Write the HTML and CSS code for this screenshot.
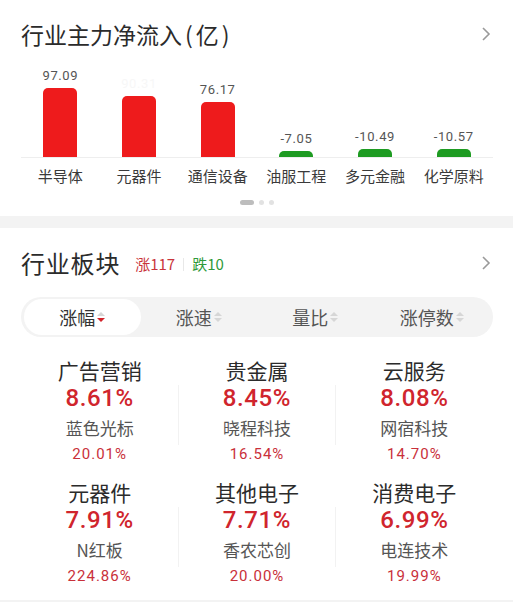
FILE: index.html
```html
<!DOCTYPE html>
<html lang="zh">
<head>
<meta charset="utf-8">
<link rel="stylesheet" href="styles.css">
</head>
<body>
<section class="card flow">
  <div class="head">
    <h2 class="title t1">行业主力净流入<span class="paren">(</span>亿<span class="paren">)</span></h2>
    <svg class="chev" viewBox="0 0 10 16" width="10" height="16"><path d="M2 2 L8 8 L2 14" fill="none" stroke="#9a9a9a" stroke-width="1.6"/></svg>
  </div>
  <div class="chart">
    <div class="col"><span class="val">97.09</span><div class="bar up" style="height:69px"></div></div>
    <div class="col"><span class="val ghost">90.31</span><div class="bar up" style="height:61px"></div></div>
    <div class="col"><span class="val">76.17</span><div class="bar up" style="height:55px"></div></div>
    <div class="col"><span class="val">-7.05</span><div class="bar down" style="height:6px"></div></div>
    <div class="col"><span class="val">-10.49</span><div class="bar down" style="height:8px"></div></div>
    <div class="col"><span class="val">-10.57</span><div class="bar down" style="height:8px"></div></div>
  </div>
  <div class="cats">
    <span>半导体</span><span>元器件</span><span>通信设备</span><span>油服工程</span><span>多元金融</span><span>化学原料</span>
  </div>
  <div class="dots"><i class="pill"></i><i></i><i></i></div>
</section>
<div class="sep"></div>
<section class="card sectors">
  <div class="head">
    <div class="left">
      <h2 class="title t2">行业板块</h2>
      <span class="cnt red">涨117</span><span class="bar-div"></span><span class="cnt green">跌10</span>
    </div>
    <svg class="chev" viewBox="0 0 10 16" width="10" height="16"><path d="M2 2 L8 8 L2 14" fill="none" stroke="#9a9a9a" stroke-width="1.6"/></svg>
  </div>
  <div class="tabs">
    <div class="tab active">涨幅<span class="sort"><i class="u"></i><i class="d on"></i></span></div>
    <div class="tab">涨速<span class="sort"><i class="u"></i><i class="d"></i></span></div>
    <div class="tab">量比<span class="sort"><i class="u"></i><i class="d"></i></span></div>
    <div class="tab">涨停数<span class="sort"><i class="u"></i><i class="d"></i></span></div>
  </div>
  <div class="grid">
    <div class="cell"><div class="nm">广告营销</div><div class="pct">8.61%</div><div class="stk">蓝色光标</div><div class="sp">20.01%</div></div>
    <div class="cell mid"><div class="nm">贵金属</div><div class="pct">8.45%</div><div class="stk">晓程科技</div><div class="sp">16.54%</div></div>
    <div class="cell"><div class="nm">云服务</div><div class="pct">8.08%</div><div class="stk">网宿科技</div><div class="sp">14.70%</div></div>
    <div class="cell"><div class="nm">元器件</div><div class="pct">7.91%</div><div class="stk">N红板</div><div class="sp">224.86%</div></div>
    <div class="cell mid"><div class="nm">其他电子</div><div class="pct">7.71%</div><div class="stk">香农芯创</div><div class="sp">20.00%</div></div>
    <div class="cell"><div class="nm">消费电子</div><div class="pct">6.99%</div><div class="stk">电连技术</div><div class="sp">19.99%</div></div>
  </div>
</section>
<div class="sep bottom"></div>
</body>
</html>
```
FILE: styles.css
```css
* { box-sizing: border-box; margin: 0; padding: 0; }
html, body { background: #fff; }
body {
  width: 513px;
  font-family: "Noto Sans CJK SC", "Noto Sans", sans-serif;
  color: #333;
}
.card { padding: 0 20px 0 21px; }
.flow { padding-top: 19px; }
.head {
  display: flex;
  align-items: center;
  justify-content: space-between;
  height: 30px;
}
.title {
  line-height: 30px;
  font-weight: 400;
  color: #2b2b2b;
}
.t1 { font-size: 23px; }
.t1 .paren { padding: 0 3px; }
.t2 { font-size: 24px; letter-spacing: 0.8px; }
.chev { margin-right: 2px; }
.chart {
  display: flex;
  height: 109px;
  align-items: flex-end;
  border-bottom: 1px solid #eeeeee;
}
.col {
  flex: 1;
  display: flex;
  flex-direction: column;
  align-items: center;
  justify-content: flex-end;
}
.val {
  font-family: "Roboto", "Noto Sans", sans-serif;
  font-size: 13px;
  line-height: 16px;
  color: #555;
  letter-spacing: 0.6px;
  margin-bottom: 4px;
}
.ghost { color: #f7f7f7; }
.bar { width: 34px; border-radius: 5px 5px 0 0; }
.up { background: #ee1b1c; }
.down { background: #1e9b22; }
.cats {
  display: flex;
  margin-top: 8px;
}
.cats span {
  flex: 1;
  text-align: center;
  font-size: 15px;
  line-height: 20px;
  color: #3a3a3a;
}
.dots {
  display: flex;
  justify-content: center;
  gap: 5px;
  margin-top: 14px;
  height: 16px;
}
.dots i {
  display: block;
  width: 5px;
  height: 5px;
  border-radius: 3px;
  background: #e2e2e2;
}
.dots i.pill { width: 14px; background: #bdbdbd; }
.sep { height: 12px; background: #f3f3f3; }
.sectors { padding-top: 20px; }
.left { display: flex; align-items: center; }
.cnt { font-size: 15px; line-height: 20px; margin-top: 2px; }
.red { color: #c9343a; margin-left: 15px; }
.green { color: #2f9a3a; }
.bar-div { width: 1px; height: 13px; background: #e8e8e8; margin: 2px 8px 0; }
.tabs {
  margin-top: 19px;
  height: 40px;
  background: #f3f3f3;
  border-radius: 20px;
  display: flex;
  align-items: center;
  padding: 2px 3px;
}
.tab {
  flex: 1;
  height: 36px;
  display: flex;
  align-items: center;
  justify-content: center;
  font-size: 18px;
  color: #555;
}
.tab.active { background: #fff; border-radius: 18px; color: #333; }
.sort {
  display: flex;
  flex-direction: column;
  gap: 2px;
  margin-left: 2px;
}
.sort i {
  display: block;
  width: 0;
  height: 0;
  border-left: 4px solid transparent;
  border-right: 4px solid transparent;
}
.sort .u { border-bottom: 4px solid #d6d6d6; }
.sort .d { border-top: 4px solid #d6d6d6; }
.sort .d.on { border-top-color: #d2232a; }
.grid {
  display: grid;
  grid-template-columns: repeat(3, 1fr);
  row-gap: 15px;
  margin-top: 20px;
}
.cell { text-align: center; position: relative; }
.cell.mid::before, .cell.mid::after {
  content: "";
  position: absolute;
  top: 28px;
  height: 60px;
  width: 1px;
  background: #f2f2f2;
}
.cell.mid::before { left: 0; }
.cell.mid::after { right: 0; }
.nm { font-size: 21px; line-height: 26px; color: #2b2b2b; }
.pct {
  font-family: "Roboto", "Noto Sans", sans-serif;
  font-size: 24px;
  line-height: 30px;
  font-weight: 500;
  color: #d0252d;
  letter-spacing: 0.6px;
}
.stk { font-size: 17px; line-height: 22px; color: #555; margin-top: 4px; }
.sp {
  font-family: "Roboto", "Noto Sans", sans-serif;
  font-size: 15px;
  line-height: 20px;
  color: #c9303a;
  letter-spacing: 1px;
  margin-top: 5px;
}
.bottom { margin-top: 14px; height: 20px; }
```
